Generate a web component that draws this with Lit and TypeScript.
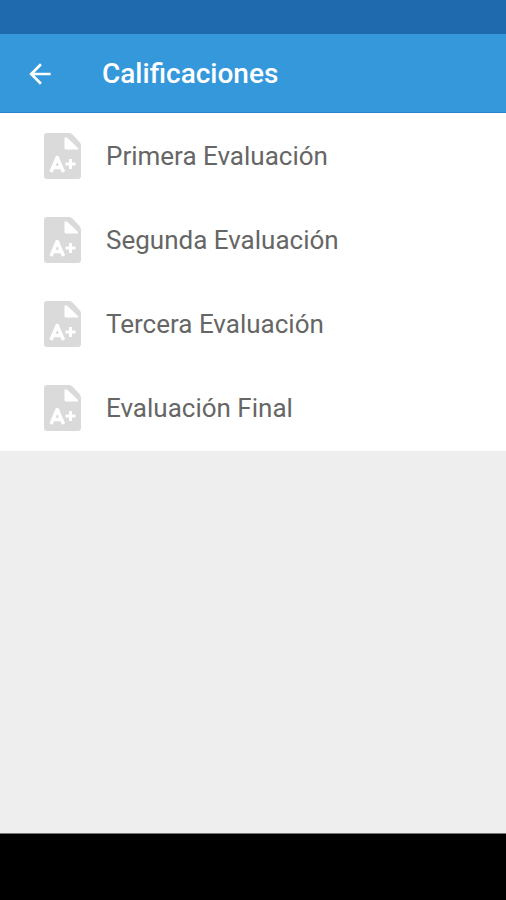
import { LitElement, html, css } from "lit";
import { customElement } from "lit/decorators.js";

const EVALUATIONS = [
  "Primera Evaluación",
  "Segunda Evaluación",
  "Tercera Evaluación",
  "Evaluación Final",
];

@customElement("app-root")
export class AppRoot extends LitElement {
  static styles = css`
    :host {
      display: flex;
      flex-direction: column;
      min-height: 100vh;
      background: #eeeeee;
      font-family: Roboto, "Liberation Sans", sans-serif;
    }
    .status {
      height: 34px;
      background: #1f69ae;
    }
    .bar {
      display: flex;
      align-items: center;
      box-sizing: border-box;
      height: 79px;
      gap: 46px;
      padding: 2px 24px 0;
      border-bottom: 1px solid #2a86c9;
      background: #3498db;
      color: #ffffff;
    }
    button {
      font: inherit;
      color: inherit;
      background: none;
      border: 0;
      margin: 0;
      padding: 0;
      cursor: pointer;
    }
    .back {
      display: flex;
    }
    .arrow {
      width: 32px;
      height: 32px;
      fill: #ffffff;
    }
    h1 {
      margin: 0;
      font-size: 28px;
      line-height: 32px;
      font-weight: 500;
    }
    ul {
      list-style: none;
      margin: 0;
      padding: 1px 0;
      background: #ffffff;
    }
    .row {
      display: flex;
      align-items: center;
      width: 100%;
      min-height: 84px;
      gap: 25px;
      padding: 0 44px;
      font-size: 26px;
      line-height: 32px;
      text-align: left;
      color: #666666;
    }
    .doc {
      flex: none;
      width: 37px;
      height: 46px;
    }
    main {
      flex: 1;
    }
    .nav {
      height: 66px;
      border-top: 1px solid #777777;
      background: #000000;
    }
  `;

  render() {
    return html`
      <div class="status"></div>
      <header class="bar">
        <button class="back" aria-label="Atrás">
          <svg class="arrow" viewBox="0 0 24 24" aria-hidden="true">
            <path d="M20 11H7.83l5.59-5.59L12 4l-8 8 8 8 1.41-1.41L7.83 13H20v-2z" />
          </svg>
        </button>
        <h1>Calificaciones</h1>
      </header>
      <main>
        <ul>
          ${EVALUATIONS.map(
            (name) => html`<li>
              <button class="row">
                <svg class="doc" viewBox="0 0 37 46" aria-hidden="true">
                  <path fill="#dadada" d="M3 0H25Q27 0 28.500 1.500L35.500 9Q37 10.500 37 12.500V43Q37 46 34 46H3Q0 46 0 43V3Q0 0 3 0Z" />
                  <path fill="#ffffff" d="M20.500 4.500H23L34 15V16.500H22Q20.500 16.500 20.500 15Z" />
                  <path fill="none" stroke="#ffffff" stroke-width="3.500" stroke-linejoin="round" d="M7 39L13.200 24.500L19.500 39M9 34.500H17.500" />
                  <path fill="none" stroke="#ffffff" stroke-width="3" d="M21.500 31H31.500M26.500 26V36" />
                </svg>
                <span>${name}</span>
              </button>
            </li>`
          )}
        </ul>
      </main>
      <div class="nav"></div>
    `;
  }
}
